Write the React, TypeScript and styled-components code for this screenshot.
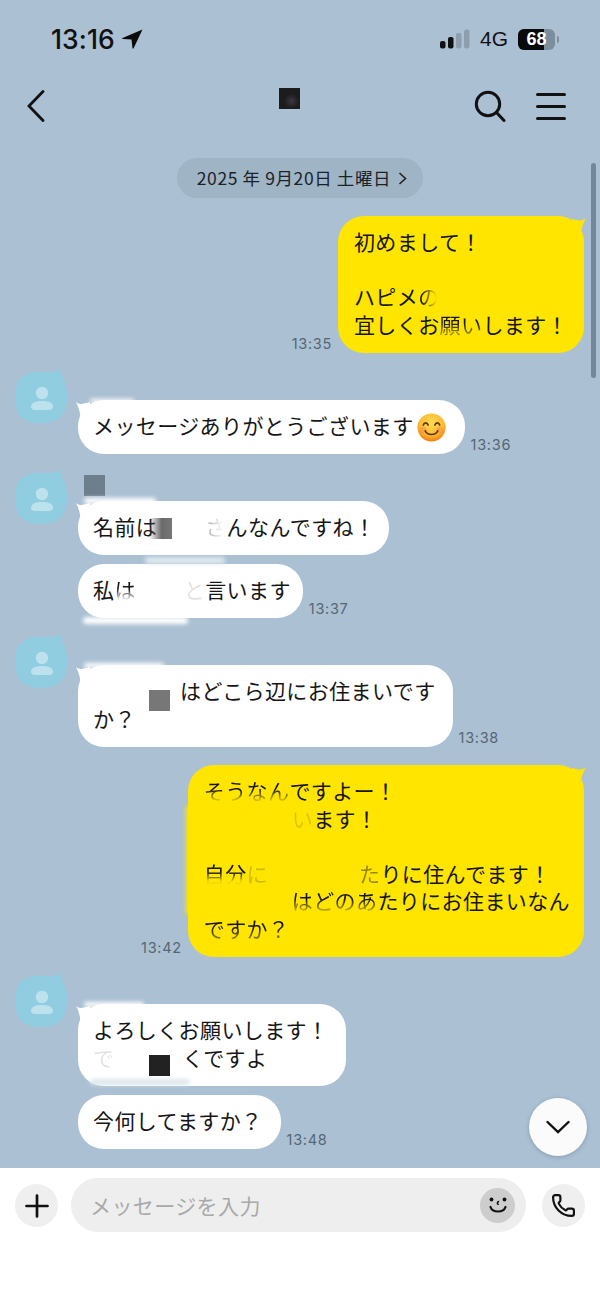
import React from 'react';
import { Phone } from 'lucide-react';
import styled, { createGlobalStyle } from 'styled-components';

const YELLOW = '#ffe500';
const WHITE = '#ffffff';

const Global = createGlobalStyle`
  html, body {
    margin: 0;
    padding: 0;
    background: #ffffff;
  }
  * {
    box-sizing: border-box;
  }
`;

const Avatar: React.FC = () => (
  <AvatarBox viewBox="0 0 52 54" aria-hidden="true">
    <path
      d="M25 3C32 3 40 4 47 0C46 3 46 5 47 7C50 12 52 18 52 28C52 46 44 54 26 54C8 54 0 46 0 28C0 10 8 3 25 3Z"
      fill="#90cde1"
    />
    <circle cx="27" cy="24" r="6.2" fill="#bde2ee" />
    <path d="M16 38C16 34 20 32 27 32C34 32 38 34 38 38C38 40 36 41 34 41H20C18 41 16 40 16 38Z" fill="#bde2ee" />
  </AvatarBox>
);

const TailLeft: React.FC = () => (
  <LeftTail viewBox="0 0 14 18" aria-hidden="true">
    <path d="M0 1C3 4 7 3 14 1V18H5C4 12 3 6 0 1Z" fill={WHITE} />
  </LeftTail>
);

const TailRight: React.FC = () => (
  <RightTail viewBox="0 0 14 18" aria-hidden="true">
    <path d="M14 1C11 4 7 4 0 2V18H8C9 12 11 6 14 1Z" fill={YELLOW} />
  </RightTail>
);

const SmileEmoji: React.FC = () => (
  <Emoji viewBox="0 0 30 30" aria-hidden="true">
    <defs>
      <radialGradient id="face" cx="50%" cy="35%" r="65%">
        <stop offset="0%" stopColor="#ffdc55" />
        <stop offset="65%" stopColor="#fdbb30" />
        <stop offset="100%" stopColor="#ee7d16" />
      </radialGradient>
    </defs>
    <circle cx="15" cy="15" r="14.5" fill="url(#face)" />
    <circle cx="6.5" cy="17.5" r="3.4" fill="#f58a4a" opacity="0.5" />
    <circle cx="23.5" cy="17.5" r="3.4" fill="#f58a4a" opacity="0.5" />
    <path d="M6.5 12.5C7.5 9.5 10.5 9.5 11.5 12.5" fill="none" stroke="#5b3210" strokeWidth="1.7" strokeLinecap="round" />
    <path d="M18.5 12.5C19.5 9.5 22.5 9.5 23.5 12.5" fill="none" stroke="#5b3210" strokeWidth="1.7" strokeLinecap="round" />
    <path d="M8.5 18.5C11 23.5 19 23.5 21.5 18.5" fill="none" stroke="#5b3210" strokeWidth="1.7" strokeLinecap="round" />
  </Emoji>
);

const App: React.FC = () => {
  return (
    <Page>
      <Global />
      <StatusBar>
        <Clock>
          <ClockText>13:16</ClockText>
          <svg width="21" height="20" viewBox="0 0 21 20" aria-hidden="true">
            <path d="M20.5 0.5L0.5 9C0 9.4 0.2 10 0.8 10L9.5 10.4L10.5 19.2C10.7 19.8 11.3 19.8 11.6 19.3Z" fill="#0c0c0c" />
          </svg>
        </Clock>
        <StatusRight>
          <svg width="30" height="20" viewBox="0 0 30 20" aria-hidden="true">
            <rect x="0" y="12" width="5.5" height="7.5" rx="2" fill="#111" />
            <rect x="8" y="8" width="5.5" height="11.5" rx="2" fill="#111" />
            <rect x="16" y="4" width="5.5" height="15.5" rx="2" fill="#8d9faf" />
            <rect x="24" y="0.5" width="5.5" height="19" rx="2" fill="#8d9faf" />
          </svg>
          <NetworkLabel>4G</NetworkLabel>
          <Battery>
            <BatteryFill />
            <BatteryLabel>68</BatteryLabel>
          </Battery>
          <BatteryTip />
        </StatusRight>
      </StatusBar>

      <NavBar>
        <svg width="20" height="32" viewBox="0 0 20 32" aria-hidden="true">
          <path d="M17 1.5L3 16L17 30.5" fill="none" stroke="#111" strokeWidth="2.8" strokeLinecap="round" />
        </svg>
        <NavTitle />
        <NavActions>
          <svg width="32" height="32" viewBox="0 0 32 32" aria-hidden="true">
            <circle cx="14" cy="14" r="11.7" fill="none" stroke="#111" strokeWidth="3" />
            <path d="M22.5 22.5L30 30.5" fill="none" stroke="#111" strokeWidth="3" strokeLinecap="round" />
          </svg>
          <Burger>
            <BurgerLine />
            <BurgerLine />
            <BurgerLine />
          </Burger>
        </NavActions>
      </NavBar>

      <ScrollThumb />

      <Chat>
        <DateRow>
          <DatePill>
            2025 年 9月20日 土曜日
            <svg width="9" height="13" viewBox="0 0 9 13" aria-hidden="true">
              <path d="M1.5 1L7.5 6.5L1.5 12" fill="none" stroke="#222" strokeWidth="1.6" />
            </svg>
          </DatePill>
        </DateRow>

        <OutRow>
          <Time>13:35</Time>
          <Bubble $color={YELLOW} $pad="12px 16px 15px 16px">
            <TailRight />
            初めまして！
            <br />
            <br />
            ハピメ<SideFade $start={1}>の</SideFade>
            <br />
            宜しくお<BottomFade $level={0.45}>願い</BottomFade>します！
          </Bubble>
        </OutRow>

        <Group>
          <Avatar />
          <GroupBody>
            <NameRow />
            <BubbleRow>
              <Bubble $color={WHITE} $pad="12px 19px 14.5px 15px">
                <TailLeft />
                <Smudge $x={12} $y={-1} $w={44} $h={4} $color="#ffffff" />
                メッセージありがとうございます
                <SmileEmoji />
              </Bubble>
              <Time>13:36</Time>
            </BubbleRow>
          </GroupBody>
        </Group>

        <Group>
          <Avatar />
          <GroupBody>
            <NameRow>
              <NameBlock />
            </NameRow>
            <BubbleRow>
              <Bubble $color={WHITE} $pad="12px 14px 14.5px 15px">
                <TailLeft />
                <Smudge $x={6} $y={-3} $w={72} $h={6} $color="#ffffff" />
                名前は
                <FadeBlock />
                <Gap $w={33} />
                <SideFade $start={0.3}>さ</SideFade>
                んなんですね！
              </Bubble>
            </BubbleRow>
            <BubbleRow>
              <Bubble $color={WHITE} $pad="12px 12px 14.5px 15px">
                <Smudge $x={67} $y={-7} $w={80} $h={7} $color="#dfe8ee" />
                <Smudge $x={5} $y={53} $w={105} $h={7} $color="#ffffff" />
                私<BottomFade $level={0.15}>は</BottomFade>
                <Gap $w={48} />
                <Faint $level={0.12}>と</Faint>
                言います
              </Bubble>
              <Time>13:37</Time>
            </BubbleRow>
          </GroupBody>
        </Group>

        <Group>
          <Avatar />
          <GroupBody>
            <NameRow />
            <BubbleRow>
              <Bubble $color={WHITE} $pad="12px 17px 15px 15px">
                <TailLeft />
                <Smudge $x={6} $y={-2} $w={80} $h={5} $color="#ffffff" />
                <Redaction $x={71} $y={25} $color="#777777" />
                <Gap $w={87} />
                はどこら辺にお住まいです
                <br />
                か？
              </Bubble>
              <Time>13:38</Time>
            </BubbleRow>
          </GroupBody>
        </Group>

        <OutRowWide>
          <Time>13:42</Time>
          <Bubble $color={YELLOW} $pad="12px 14px 15px 16px">
            <TailRight />
            <Smudge $x={-2} $y={40} $w={5} $h={110} $color={YELLOW} />
            <BottomFade $level={0.2}>そうなん</BottomFade>ですよー！
            <br />
            <Gap $w={88} />
            <Faint $level={0.15}>い</Faint>ます！
            <br />
            <br />
            <BottomFade $level={0.05}>自分</BottomFade>
            <Faint $level={0.2}>に</Faint>
            <Gap $w={91} />
            <Faint $level={0.45}>た</Faint>りに住んでます！
            <br />
            <Gap $w={88} />
            <BottomFade $level={0.3}>はどのあ</BottomFade>たりにお住まいなん
            <br />
            <BottomFade $level={0.55}>ですか？</BottomFade>
          </Bubble>
        </OutRowWide>

        <Group>
          <Avatar />
          <GroupBody>
            <NameRow />
            <BubbleRow>
              <Bubble $color={WHITE} $pad="12px 18px 15px 15px">
                <TailLeft />
                <Smudge $x={6} $y={-2} $w={60} $h={5} $color="#ffffff" />
                <Smudge $x={12} $y={75} $w={100} $h={6} $color="#dde6ec" />
                <Redaction $x={71} $y={51} $color="#222222" />
                よろしくお願いします！
                <br />
                <Faint $level={0.12}>で</Faint>
                <Gap $w={68} />
                くですよ
              </Bubble>
            </BubbleRow>
            <BubbleRow>
              <Bubble $color={WHITE} $pad="12px 18px 14.5px 15px">今何してますか？</Bubble>
              <Time>13:48</Time>
            </BubbleRow>
          </GroupBody>
        </Group>

        <ScrollDown>
          <svg width="24" height="14" viewBox="0 0 24 14" aria-hidden="true">
            <path d="M1.5 2L12 12L22.5 2" fill="none" stroke="#111" strokeWidth="2.4" strokeLinecap="round" />
          </svg>
        </ScrollDown>
      </Chat>

      <InputBar>
        <RoundButton>
          <svg width="24" height="24" viewBox="0 0 24 24" aria-hidden="true">
            <path d="M12 1.5V22.5M1.5 12H22.5" stroke="#111" strokeWidth="2.7" strokeLinecap="round" />
          </svg>
        </RoundButton>
        <InputBox>
          <Placeholder>メッセージを入力</Placeholder>
          <SmileButton>
            <svg width="24" height="24" viewBox="0 0 24 24" aria-hidden="true">
              <circle cx="5.5" cy="6.5" r="1.9" fill="#111" />
              <circle cx="18.5" cy="6.5" r="1.9" fill="#111" />
              <path d="M12.5 8.5C11 9.3 11 10.6 12.2 11.3" fill="none" stroke="#111" strokeWidth="1.5" strokeLinecap="round" />
              <path d="M4.5 14C6.5 20 17.5 20 19.5 14" fill="none" stroke="#111" strokeWidth="2.2" strokeLinecap="round" />
            </svg>
          </SmileButton>
        </InputBox>
        <RoundButton>
          <Phone size={25} strokeWidth={2.1} color="#111" />
        </RoundButton>
      </InputBar>
    </Page>
  );
};

const Page = styled.div`
  position: relative;
  width: 600px;
  height: 1294px;
  overflow: hidden;
  display: flex;
  flex-direction: column;
  background: #abc0d3;
  color: #111111;
  font-family: 'Noto Sans CJK JP', sans-serif;
`;

const StatusBar = styled.div`
  height: 78px;
  padding: 0 41px 0 51px;
  display: flex;
  justify-content: space-between;
  align-items: center;
`;

const Clock = styled.div`
  display: flex;
  align-items: center;
  gap: 7px;
`;

const ClockText = styled.span`
  font-family: Inter, 'Liberation Sans', sans-serif;
  font-size: 26.5px;
  font-weight: 500;
  letter-spacing: 0.1px;
  line-height: 30px;
`;

const StatusRight = styled.div`
  display: flex;
  align-items: center;
`;

const NetworkLabel = styled.span`
  margin: 0 10px 0 10px;
  font-family: 'Liberation Sans', sans-serif;
  font-size: 21px;
  line-height: 24px;
`;

const Battery = styled.div`
  position: relative;
  width: 37px;
  height: 21px;
  border-radius: 6px;
  overflow: hidden;
  background: #7c8d9b;
  display: flex;
  align-items: center;
  justify-content: center;
`;

const BatteryFill = styled.div`
  position: absolute;
  left: 0;
  top: 0;
  bottom: 0;
  width: 26px;
  background: #0a0a0a;
`;

const BatteryLabel = styled.span`
  position: relative;
  color: #ffffff;
  font-family: 'Liberation Sans', sans-serif;
  font-size: 18px;
  font-weight: 700;
  line-height: 21px;
`;

const BatteryTip = styled.div`
  width: 2px;
  height: 7px;
  margin-left: 2px;
  border-radius: 0 2px 2px 0;
  background: #7c8d9b;
`;

const NavBar = styled.div`
  height: 56px;
  padding: 0 34px 0 26px;
  display: flex;
  align-items: center;
`;

const NavTitle = styled.div`
  width: 21px;
  height: 21px;
  margin: 0 0 16px 233px;
  background: radial-gradient(circle at 60% 62%, #3a3a3e 0, #2a2a2d 22%, #1c1c1f 40%);
`;

const NavActions = styled.div`
  margin-left: auto;
  display: flex;
  align-items: center;
  gap: 30px;
`;

const Burger = styled.div`
  width: 30px;
  display: flex;
  flex-direction: column;
  gap: 9px;
`;

const BurgerLine = styled.div`
  height: 3px;
  border-radius: 2px;
  background: #111111;
`;

const ScrollThumb = styled.div`
  position: absolute;
  right: 4px;
  top: 163px;
  width: 5px;
  height: 215px;
  border-radius: 3px;
  background: #74879a;
`;

const Chat = styled.div`
  position: relative;
  flex: 1;
  padding-top: 24px;
  overflow: hidden;
`;

const DateRow = styled.div`
  display: flex;
  justify-content: center;
  margin-bottom: 18px;
`;

const DatePill = styled.div`
  height: 40px;
  padding: 0 16px 0 20px;
  border-radius: 20px;
  display: flex;
  align-items: center;
  gap: 7px;
  background: #9fb4c5;
  color: #1c2227;
  font-size: 17.5px;
  letter-spacing: 0.6px;
  line-height: 24px;
  white-space: pre;
`;

const OutRow = styled.div`
  display: flex;
  justify-content: flex-end;
  align-items: flex-end;
  gap: 6px;
  padding-right: 16px;
`;

const OutRowWide = styled(OutRow)`
  margin-top: 18px;
`;

const Group = styled.div`
  margin-top: 16px;
  padding-left: 15px;
  display: flex;
  align-items: flex-start;
  gap: 11px;
`;

const AvatarBox = styled.svg`
  flex: none;
  width: 52px;
  height: 54px;
`;

const GroupBody = styled.div`
  display: flex;
  flex-direction: column;
  align-items: flex-start;
  gap: 9px;
`;

const NameRow = styled.div`
  height: 22px;
  padding-top: 5px;
`;

const NameBlock = styled.div`
  width: 21px;
  height: 21px;
  margin-left: 6px;
  background: #6d7e8c;
`;

const BubbleRow = styled.div`
  display: flex;
  align-items: flex-end;
  gap: 6px;
`;

const Bubble = styled.div<{ $color: string; $pad: string }>`
  position: relative;
  padding: ${(p) => p.$pad};
  border-radius: 26px;
  background: ${(p) => p.$color};
  color: #161616;
  font-size: 21px;
  letter-spacing: 0.4px;
  line-height: 27.5px;
  white-space: nowrap;
`;

const LeftTail = styled.svg`
  position: absolute;
  left: -2px;
  top: 1px;
  width: 14px;
  height: 18px;
`;

const RightTail = styled.svg`
  position: absolute;
  right: -2px;
  top: 1px;
  width: 14px;
  height: 18px;
`;

const Time = styled.span`
  flex: none;
  color: #566673;
  font-family: Inter, 'Liberation Sans', sans-serif;
  font-size: 14.5px;
  letter-spacing: 0.7px;
  line-height: 18px;
`;

const Faint = styled.span<{ $level: number }>`
  opacity: ${(p) => p.$level};
`;

const BottomFade = styled.span<{ $level: number }>`
  display: inline-block;
  mask-image: linear-gradient(#000 45%, rgba(0, 0, 0, ${(p) => p.$level}) 80%);
`;

const SideFade = styled.span<{ $start: number }>`
  display: inline-block;
  mask-image: linear-gradient(90deg, rgba(0, 0, 0, ${(p) => p.$start}) 15%, transparent 85%);
`;

const Gap = styled.span<{ $w: number }>`
  display: inline-block;
  width: ${(p) => p.$w}px;
`;

const FadeBlock = styled.span`
  display: inline-block;
  width: 23px;
  height: 21px;
  margin-left: -8px;
  vertical-align: -4px;
  background: linear-gradient(90deg, rgba(110, 110, 110, 0), #6a6a6a 55%, #777777);
`;

const Smudge = styled.span<{ $x: number; $y: number; $w: number; $h: number; $color: string }>`
  position: absolute;
  left: ${(p) => p.$x}px;
  top: ${(p) => p.$y}px;
  width: ${(p) => p.$w}px;
  height: ${(p) => p.$h}px;
  background: ${(p) => p.$color};
  border-radius: 4px;
  filter: blur(2px);
`;

const Redaction = styled.span<{ $x: number; $y: number; $color: string }>`
  position: absolute;
  left: ${(p) => p.$x}px;
  top: ${(p) => p.$y}px;
  width: 21px;
  height: 21px;
  background: ${(p) => p.$color};
`;

const Emoji = styled.svg`
  width: 29px;
  height: 29px;
  margin: -6px 0 -6px 3px;
  vertical-align: -2px;
`;

const ScrollDown = styled.div`
  position: absolute;
  right: 13px;
  bottom: 12px;
  width: 58px;
  height: 58px;
  border-radius: 50%;
  display: flex;
  align-items: center;
  justify-content: center;
  background: #fbfbfb;
  box-shadow: 0 1px 4px rgba(70, 90, 110, 0.35);
`;

const InputBar = styled.div`
  flex: none;
  height: 126px;
  padding: 10px 15px 0;
  display: flex;
  align-items: flex-start;
  gap: 13px;
  background: #ffffff;
`;

const RoundButton = styled.div`
  flex: none;
  width: 43px;
  height: 43px;
  margin-top: 6px;
  border-radius: 50%;
  display: flex;
  align-items: center;
  justify-content: center;
  background: #efefef;

  &:last-child {
    margin-left: 3px;
  }
`;

const InputBox = styled.div`
  flex: 1;
  height: 54px;
  padding: 0 11px 0 19px;
  border-radius: 27px;
  display: flex;
  align-items: center;
  justify-content: space-between;
  background: #eeeeee;
`;

const Placeholder = styled.span`
  color: #a9a9a9;
  font-size: 21px;
  letter-spacing: 0.4px;
  line-height: 28px;
`;

const SmileButton = styled.div`
  width: 35px;
  height: 35px;
  border-radius: 50%;
  display: flex;
  align-items: center;
  justify-content: center;
  background: #cdcdcd;
`;

export default App;
